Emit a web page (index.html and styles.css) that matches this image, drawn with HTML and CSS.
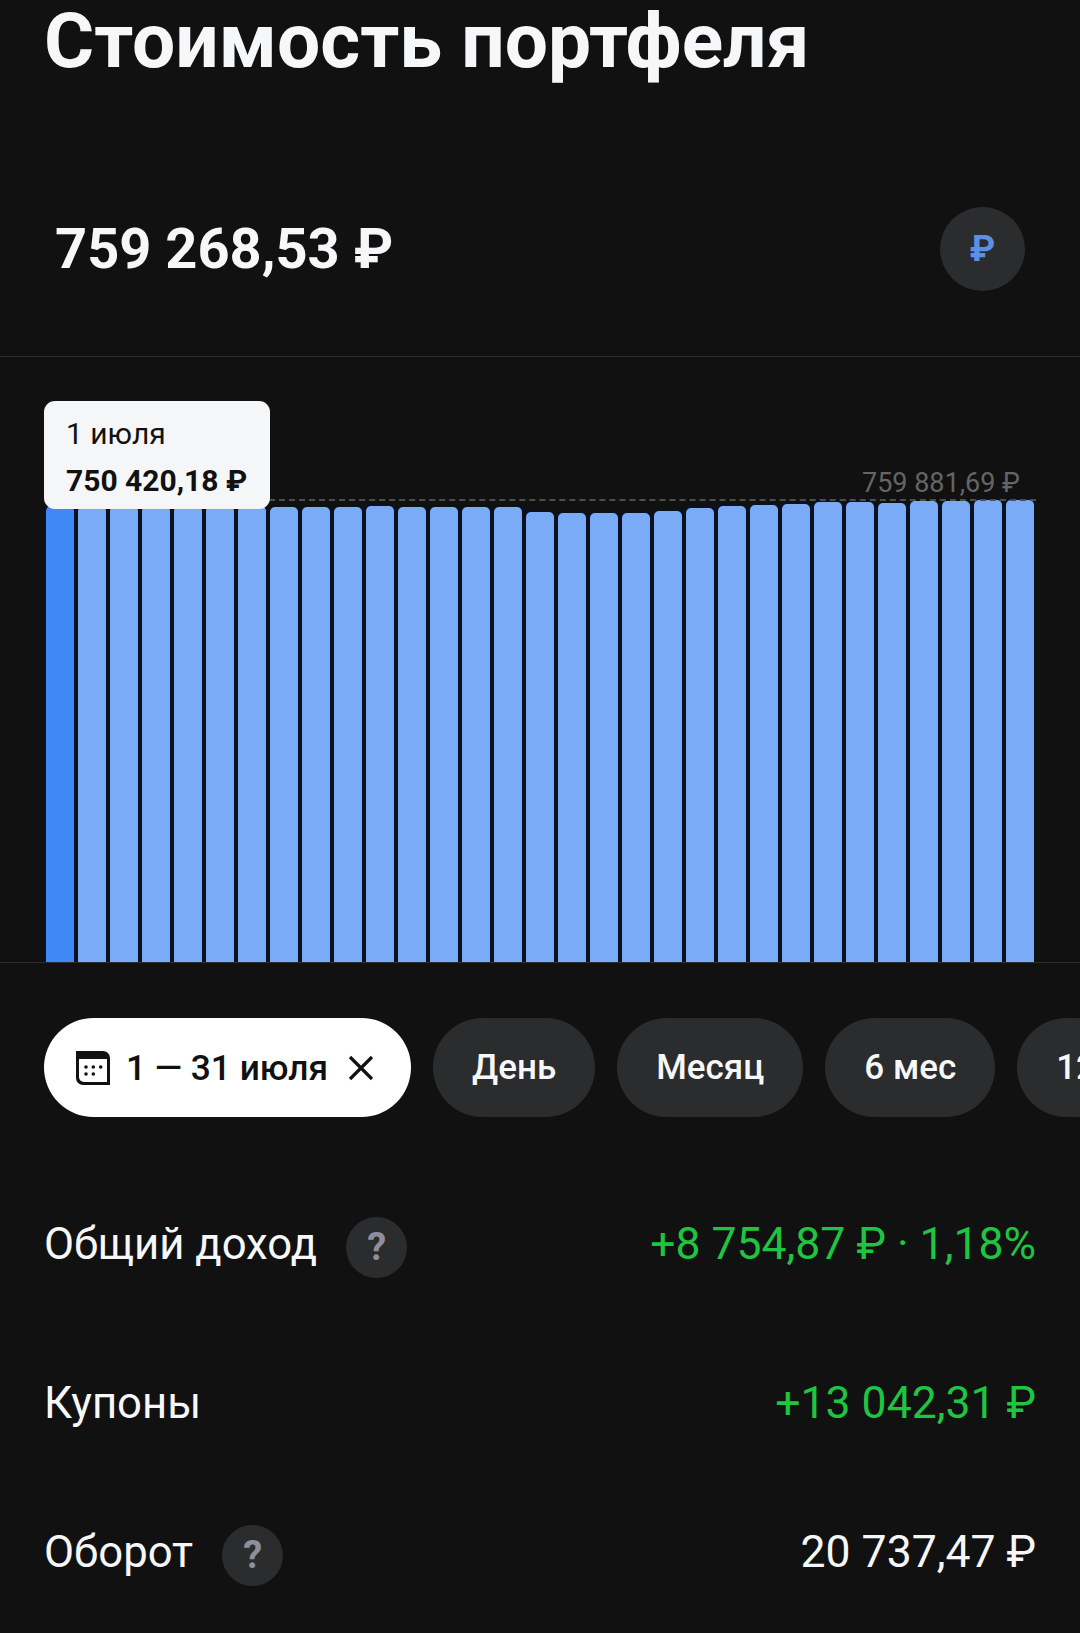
FILE: index.html
```html
<!DOCTYPE html>
<html lang="ru">
<head>
    <meta charset="UTF-8">
    <meta name="viewport" content="width=device-width, initial-scale=1.0">
    <title>Стоимость портфеля</title>
    <link rel="stylesheet" href="styles.css">
</head>
<body>
    <h1 class="title">Стоимость портфеля</h1>

    <div class="total">
        <span class="total-value">759 268,53 ₽</span>
        <button class="currency" type="button">₽</button>
    </div>

    <div class="chart">
        <div class="tooltip">
            <div class="tooltip-date">1 июля</div>
            <div class="tooltip-value">750 420,18 ₽</div>
        </div>
        <div class="chart-max">759 881,69 ₽</div>
        <div class="chart-line"></div>
        <div class="bars">
            <div class="bar bar-active" style="height: 456px"></div>
            <div class="bar" style="height: 456px"></div>
            <div class="bar" style="height: 456px"></div>
            <div class="bar" style="height: 456px"></div>
            <div class="bar" style="height: 456px"></div>
            <div class="bar" style="height: 456px"></div>
            <div class="bar" style="height: 456px"></div>
            <div class="bar" style="height: 455px"></div>
            <div class="bar" style="height: 455px"></div>
            <div class="bar" style="height: 455px"></div>
            <div class="bar" style="height: 456px"></div>
            <div class="bar" style="height: 455px"></div>
            <div class="bar" style="height: 455px"></div>
            <div class="bar" style="height: 455px"></div>
            <div class="bar" style="height: 455px"></div>
            <div class="bar" style="height: 450px"></div>
            <div class="bar" style="height: 449px"></div>
            <div class="bar" style="height: 449px"></div>
            <div class="bar" style="height: 449px"></div>
            <div class="bar" style="height: 451px"></div>
            <div class="bar" style="height: 454px"></div>
            <div class="bar" style="height: 456px"></div>
            <div class="bar" style="height: 457px"></div>
            <div class="bar" style="height: 458px"></div>
            <div class="bar" style="height: 460px"></div>
            <div class="bar" style="height: 460px"></div>
            <div class="bar" style="height: 459px"></div>
            <div class="bar" style="height: 461px"></div>
            <div class="bar" style="height: 461px"></div>
            <div class="bar" style="height: 462px"></div>
            <div class="bar" style="height: 462px"></div>
        </div>
    </div>

    <div class="pills">
        <div class="pill pill-active">
            <svg class="pill-icon" viewBox="0 0 36 36" width="36" height="36">
                <path d="M1 1h27a7 7 0 0 1 7 7v27H8a7 7 0 0 1-7-7z" fill="#111"/>
                <path d="M4 9h28v23H9a5 5 0 0 1-5-5z" fill="#fff"/>
                <g fill="#111">
                    <circle cx="11" cy="17" r="1.8"/>
                    <circle cx="18.3" cy="17" r="1.8"/>
                    <circle cx="25.7" cy="17" r="1.8"/>
                    <circle cx="11" cy="24" r="1.8"/>
                    <circle cx="18.3" cy="24" r="1.8"/>
                </g>
            </svg>
            <span class="pill-text">1 — 31 июля</span>
            <svg class="pill-close" viewBox="0 0 26 26" width="26" height="26">
                <path d="M2 2l22 22M24 2L2 24" stroke="#111" stroke-width="3.2" fill="none"/>
            </svg>
        </div>
        <div class="pill">День</div>
        <div class="pill">Месяц</div>
        <div class="pill">6 мес</div>
        <div class="pill">12 мес</div>
    </div>

    <div class="stats">
        <div class="row row-income">
            <div class="row-label">Общий доход <span class="help">?</span></div>
            <div class="row-value green">+8 754,87 ₽ · 1,18%</div>
        </div>
        <div class="row row-coupons">
            <div class="row-label">Купоны</div>
            <div class="row-value green">+13 042,31 ₽</div>
        </div>
        <div class="row row-turnover">
            <div class="row-label">Оборот <span class="help">?</span></div>
            <div class="row-value">20 737,47 ₽</div>
        </div>
    </div>
</body>
</html>
```

FILE: styles.css
```css
* {
    box-sizing: border-box;
}
html, body {
    height: 100%;
}
body {
    margin: 0;
    width: 1080px;
    height: 1633px;
    overflow: hidden;
    background-color: #111112;
    color: #f6f7f8;
    font-family: Roboto, "Noto Sans", sans-serif;
}
.title {
    margin: 0;
    padding: 0 0 0 44px;
    height: 82px;
    line-height: 82px;
    font-size: 76.7px;
    font-weight: 700;
    white-space: nowrap;
}
.total {
    display: flex;
    align-items: center;
    justify-content: space-between;
    height: 275px;
    padding: 60px 55px 0 55px;
    border-bottom: 1px solid #2c2d2e;
}
.total-value {
    font-size: 56px;
    font-weight: 700;
    margin-bottom: 1px;
}
.currency {
    width: 85px;
    height: 84px;
    padding: 0;
    border: 0;
    border-radius: 50%;
    background-color: #2b2c2d;
    color: #5b90e6;
    font-family: inherit;
    font-size: 36px;
    font-weight: 700;
}
.chart {
    position: relative;
    height: 606px;
    border-bottom: 1px solid #2c2d2e;
}
.bars {
    display: flex;
    align-items: flex-end;
    gap: 4px;
    height: 100%;
    padding-left: 46px;
    overflow: hidden;
}
.bar {
    width: 28px;
    flex-shrink: 0;
    background-color: #7aabf7;
    border-radius: 5px 5px 0 0;
    box-shadow: 0 0 0 2px #0a1220;
}
.bar-active {
    background-color: #3f88f5;
}
.tooltip {
    position: absolute;
    z-index: 2;
    left: 44px;
    top: 44px;
    width: 226px;
    height: 108px;
    padding: 15px 22px;
    background-color: #f5f6f8;
    border-radius: 11px;
    color: #111;
}
.tooltip-date {
    font-size: 30px;
    line-height: 36px;
}
.tooltip-value {
    margin-top: 11px;
    font-size: 30px;
    line-height: 36px;
    font-weight: 700;
    white-space: nowrap;
}
.chart-max {
    position: absolute;
    right: 60px;
    top: 108px;
    font-size: 27px;
    line-height: 36px;
    color: #646566;
}
.chart-line {
    position: absolute;
    z-index: 1;
    left: 269px;
    right: 44px;
    top: 142px;
    border-top: 2px dashed #4d4d4d;
}
.pills {
    display: flex;
    gap: 22px;
    padding: 55px 0 0 44px;
    overflow: hidden;
}
.pill {
    flex-shrink: 0;
    display: flex;
    align-items: center;
    height: 99px;
    padding: 0 39px;
    border-radius: 50px;
    background-color: #2b2c2d;
    font-size: 35px;
    font-weight: 500;
    white-space: nowrap;
}
.pill-active {
    width: 367px;
    padding: 0 0 0 31px;
    background-color: #fff;
    color: #111;
}
.pill-text {
    margin-left: 15px;
    font-size: 35.3px;
}
.pill-close {
    margin-left: auto;
    margin-right: 37px;
}
.stats {
    padding: 0 44px;
}
.row {
    display: flex;
    align-items: center;
    justify-content: space-between;
    height: 78px;
}
.row-income {
    margin-top: 88px;
}
.row-coupons {
    margin-top: 81px;
}
.row-turnover {
    margin-top: 71px;
}
.row-label {
    display: flex;
    align-items: center;
    gap: 29px;
    font-size: 43.7px;
}
.row-value {
    font-size: 44.5px;
}
.help {
    width: 61px;
    height: 61px;
    margin-top: 7px;
    border-radius: 50%;
    background-color: #2b2c2d;
    color: #8e8f9c;
    font-size: 38px;
    font-weight: 700;
    line-height: 61px;
    text-align: center;
}
.green {
    color: #1fc441;
}
```
